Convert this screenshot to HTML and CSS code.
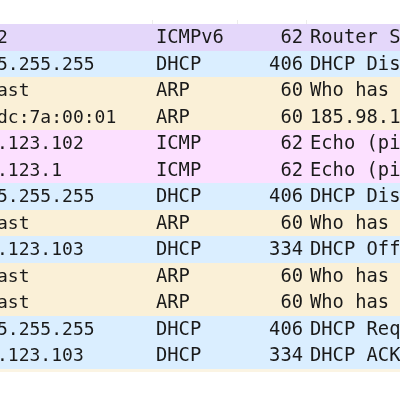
FILE: index.html
```html
<!DOCTYPE html>
<html>
<head>
<meta charset="utf-8">
<link rel="stylesheet" href="styles.css">
</head>
<body>
<div class="list">
  <div class="head"><div class="gap"></div><div class="ticks"><span></span><span></span><span></span><span></span></div></div>
  <div class="row lav"><span class="dst">ff02::2</span><span class="pro">ICMPv6</span><span class="len">62</span><span class="inf">Router Solicitation from 52:54:00:12:34:56</span></div>
  <div class="row blu"><span class="dst">255.255.255.255</span><span class="pro">DHCP</span><span class="len">406</span><span class="inf">DHCP Discover - Transaction ID 0x1a2b3c4d</span></div>
  <div class="row bei"><span class="dst">Broadcast</span><span class="pro">ARP</span><span class="len">60</span><span class="inf">Who has 185.98.123.1? Tell 185.98.123.102</span></div>
  <div class="row bei"><span class="dst">52:54:dc:7a:00:01</span><span class="pro">ARP</span><span class="len">60</span><span class="inf">185.98.123.1 is at 52:54:00:12:34:56</span></div>
  <div class="row pnk"><span class="dst">185.98.123.102</span><span class="pro">ICMP</span><span class="len">62</span><span class="inf">Echo (ping) request id=0x0001</span></div>
  <div class="row pnk"><span class="dst">185.98.123.1</span><span class="pro">ICMP</span><span class="len">62</span><span class="inf">Echo (ping) reply id=0x0001</span></div>
  <div class="row blu"><span class="dst">255.255.255.255</span><span class="pro">DHCP</span><span class="len">406</span><span class="inf">DHCP Discover - Transaction ID 0x5e6f7a8b</span></div>
  <div class="row bei"><span class="dst">Broadcast</span><span class="pro">ARP</span><span class="len">60</span><span class="inf">Who has 185.98.123.103? Tell 185.98.123.1</span></div>
  <div class="row blu"><span class="dst">185.98.123.103</span><span class="pro">DHCP</span><span class="len">334</span><span class="inf">DHCP Offer - Transaction ID 0x5e6f7a8b</span></div>
  <div class="row bei"><span class="dst">Broadcast</span><span class="pro">ARP</span><span class="len">60</span><span class="inf">Who has 185.98.123.103? Tell 0.0.0.0</span></div>
  <div class="row bei"><span class="dst">Broadcast</span><span class="pro">ARP</span><span class="len">60</span><span class="inf">Who has 185.98.123.103? Tell 0.0.0.0</span></div>
  <div class="row blu"><span class="dst">255.255.255.255</span><span class="pro">DHCP</span><span class="len">406</span><span class="inf">DHCP Request - Transaction ID 0x5e6f7a8b</span></div>
  <div class="row blu"><span class="dst">185.98.123.103</span><span class="pro">DHCP</span><span class="len">334</span><span class="inf">DHCP ACK - Transaction ID 0x5e6f7a8b</span></div>
  <div class="tail"></div>
</div>
</body>
</html>
```
FILE: styles.css
```css
html, body {
  margin: 0;
  padding: 0;
  background: #ffffff;
  overflow: hidden;
  width: 400px;
  height: 400px;
}
.list {
  margin-left: -68px;
  width: 700px;
  font-family: "DejaVu Sans Mono", monospace;
  font-size: 18.8px;
  color: #1a1a1a;
  filter: blur(0.55px);
}
.head {
  height: 24px;
  display: flex;
  flex-direction: column;
}
.gap {
  height: 20px;
}
.ticks {
  height: 4px;
  display: grid;
  grid-template-columns: 221px 85px 69px 1fr;
}
.ticks span {
  border-right: 1px solid #ececec;
}
.row {
  height: 26.5px;
  display: grid;
  grid-template-columns: 221px 85px 69px 1fr;
  align-items: center;
  white-space: pre;
  overflow: hidden;
  line-height: 26.5px;
}
.dst {
  font-size: 18px;
}
.pro {
  padding-left: 3px;
}
.len {
  text-align: right;
  padding-right: 4px;
}
.inf {
  padding-left: 3px;
}
.lav { background: #e4d7fa; }
.blu { background: #daeeff; }
.bei { background: #faf0d7; }
.pnk { background: #fce0ff; }
.tail {
  height: 3px;
  background: #fbf4e3;
}
```
